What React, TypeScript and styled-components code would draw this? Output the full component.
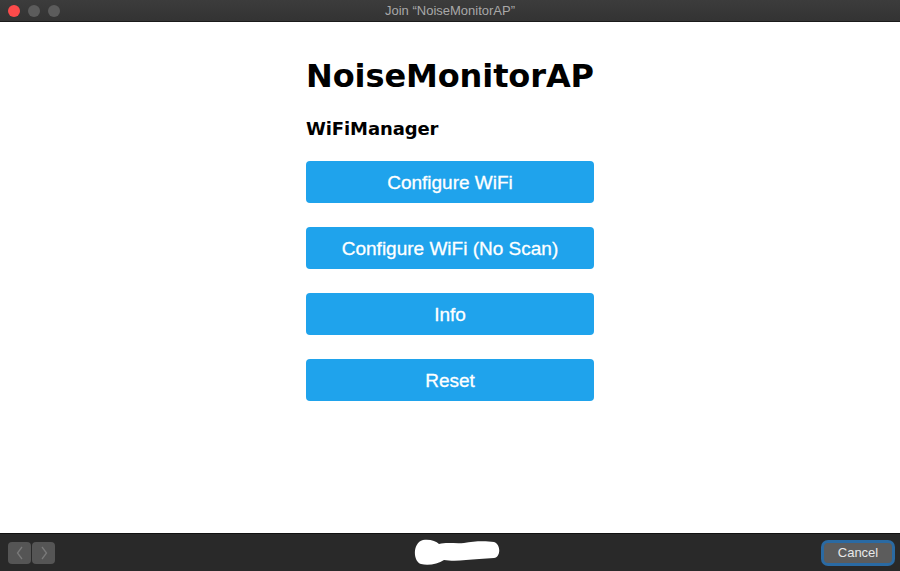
import React from "react";
import styled, { createGlobalStyle } from "styled-components";

const GlobalStyle = createGlobalStyle`
  html, body {
    margin: 0;
    padding: 0;
    background: #ffffff;
  }
`;

const Window = styled.div`
  width: 900px;
  height: 571px;
  display: flex;
  flex-direction: column;
  background: #ffffff;
  overflow: hidden;
`;

const TitleBar = styled.div`
  height: 21px;
  flex: none;
  display: flex;
  align-items: center;
  position: relative;
  background: linear-gradient(#3c3c3c, #333333);
  border-bottom: 1px solid #1a1a1a;
  padding-left: 8px;
  gap: 8px;
`;

const Light = styled.span<{ $color: string }>`
  width: 12px;
  height: 12px;
  border-radius: 50%;
  background: ${(p) => p.$color};
`;

const TitleText = styled.div`
  position: absolute;
  left: 0;
  right: 0;
  top: 0;
  bottom: 0;
  display: flex;
  align-items: center;
  justify-content: center;
  font-family: "Liberation Sans", Arial, sans-serif;
  font-size: 13px;
  color: #a8a8a8;
  pointer-events: none;
`;

const Content = styled.main`
  flex: 1;
  display: flex;
  justify-content: center;
`;

const Column = styled.div`
  width: 288px;
  padding-top: 35px;
  display: flex;
  flex-direction: column;
`;

const Heading = styled.h1`
  margin: 0;
  font-family: Verdana, "DejaVu Sans", sans-serif;
  font-weight: bold;
  font-size: 32px;
  line-height: 38px;
  color: #000;
  letter-spacing: -0.1px;
`;

const SubHeading = styled.h3`
  margin: 23px 0 0;
  font-family: Verdana, "DejaVu Sans", sans-serif;
  font-weight: bold;
  font-size: 18px;
  line-height: 22px;
  color: #000;
  letter-spacing: -0.1px;
`;

const Menu = styled.div`
  margin-top: 21px;
  display: flex;
  flex-direction: column;
  gap: 24px;
`;

const MenuButton = styled.button`
  height: 42px;
  width: 100%;
  border: 0;
  border-radius: 4px;
  background: #1fa3ec;
  color: #ffffff;
  font-family: "Liberation Sans", Helvetica, Arial, sans-serif;
  font-size: 19px;
  line-height: 44px;
  cursor: pointer;
  padding: 0;
  -webkit-text-stroke: 0.3px #ffffff;
`;

const BottomBar = styled.footer`
  height: 37px;
  flex: none;
  display: flex;
  align-items: center;
  justify-content: space-between;
  position: relative;
  background: #292929;
  border-top: 1px solid #111;
  padding: 0 5px 0 8px;
`;

const NavGroup = styled.div`
  display: flex;
  gap: 1px;
`;

const NavButton = styled.div`
  width: 23px;
  height: 22px;
  border-radius: 4px;
  background: #555555;
  display: flex;
  align-items: center;
  justify-content: center;
`;

const Redaction = styled.svg`
  position: absolute;
  left: 412px;
  top: 5px;
`;

const CancelRing = styled.div`
  padding: 3px;
  border-radius: 7px;
  background: #2a6aa3;
`;

const CancelButton = styled.button`
  display: block;
  height: 20px;
  width: 68px;
  border: 0;
  border-radius: 4px;
  background: #5c5c5c;
  color: #e8e8e8;
  font-family: "Liberation Sans", Arial, sans-serif;
  font-size: 13px;
  padding: 0;
`;

const Chevron = ({ dir }: { dir: "left" | "right" }) => (
  <svg width="8" height="14" viewBox="0 0 8 14">
    <path
      d={dir === "left" ? "M6 1 L1.5 7 L6 13" : "M2 1 L6.5 7 L2 13"}
      fill="none"
      stroke="#7a7a7a"
      strokeWidth="1.3"
    />
  </svg>
);

export default function App() {
  return (
    <Window>
      <GlobalStyle />
      <TitleBar>
        <Light $color="#fc4b4b" />
        <Light $color="#5c5c5c" />
        <Light $color="#5c5c5c" />
        <TitleText>Join “NoiseMonitorAP”</TitleText>
      </TitleBar>
      <Content>
        <Column>
          <Heading>NoiseMonitorAP</Heading>
          <SubHeading>WiFiManager</SubHeading>
          <Menu>
            <MenuButton>Configure WiFi</MenuButton>
            <MenuButton>Configure WiFi (No Scan)</MenuButton>
            <MenuButton>Info</MenuButton>
            <MenuButton>Reset</MenuButton>
          </Menu>
        </Column>
      </Content>
      <BottomBar>
        <NavGroup>
          <NavButton>
            <Chevron dir="left" />
          </NavButton>
          <NavButton>
            <Chevron dir="right" />
          </NavButton>
        </NavGroup>
        <Redaction width="88" height="27" viewBox="0 0 88 27">
          <path
            d="M11 1 C18 0 24 2 27 5 C35 3 44 5 52 4 C62 2 74 2 82 3 C89 5 89 18 82 19 C72 20 62 20 54 21 C46 22 38 22 32 21 C26 25 16 27 9 25 C1 23 0 4 11 1 Z"
            fill="#ffffff"
          />
        </Redaction>
        <CancelRing>
          <CancelButton>Cancel</CancelButton>
        </CancelRing>
      </BottomBar>
    </Window>
  );
}
